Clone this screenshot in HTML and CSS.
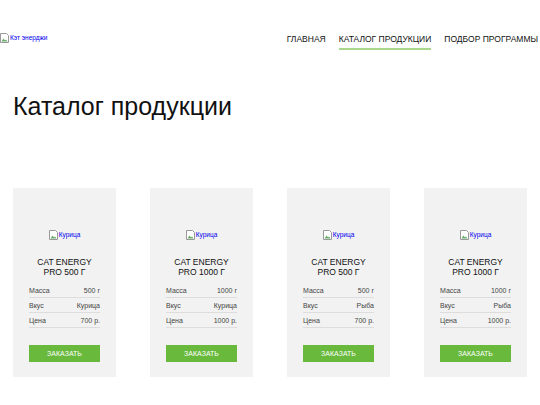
FILE: index.html
```html
<!DOCTYPE html>
<html>
<head>
 <meta charset="utf-8">
 <title>Кэт энерджи</title>
 <link rel="stylesheet" href="styles.css">
</head>
<body>
  <div class="header">
	<a class="logo" href="#"><svg class="broken" width="9" height="10" viewBox="0 0 9 10"><path d="M0.5 0.5h6l2 2v7h-8z" fill="#fff" stroke="#999"/><path d="M1.5 8.5l2-3 1.5 2 1-1 1.5 2z" fill="#6a6"/></svg>Кэт энерджи</a>
	<div class="nav">
		<a class="nav-item" href="#">Главная</a>
		<a class="nav-item nav-active" href="#">Каталог продукции</a>
		<a class="nav-item" href="#">Подбор программы</a>
	</div>
  </div>

  <h1 class="title">Каталог продукции</h1>

  <div class="catalog">
	<div class="card">
		<div class="card-img"><a href="#"><svg class="broken" width="9" height="10" viewBox="0 0 9 10"><path d="M0.5 0.5h6l2 2v7h-8z" fill="#fff" stroke="#999"/><path d="M1.5 8.5l2-3 1.5 2 1-1 1.5 2z" fill="#6a6"/></svg>Курица</a></div>
		<div class="card-name">Cat Energy<br>Pro 500 г</div>
		<table class="card-info">
			<tr><td>Масса</td><td>500 г</td></tr>
			<tr><td>Вкус</td><td>Курица</td></tr>
			<tr><td>Цена</td><td>700 р.</td></tr>
		</table>
		<a class="card-btn" href="#">Заказать</a>
	</div>
	<div class="card">
		<div class="card-img"><a href="#"><svg class="broken" width="9" height="10" viewBox="0 0 9 10"><path d="M0.5 0.5h6l2 2v7h-8z" fill="#fff" stroke="#999"/><path d="M1.5 8.5l2-3 1.5 2 1-1 1.5 2z" fill="#6a6"/></svg>Курица</a></div>
		<div class="card-name">Cat Energy<br>Pro 1000 г</div>
		<table class="card-info">
			<tr><td>Масса</td><td>1000 г</td></tr>
			<tr><td>Вкус</td><td>Курица</td></tr>
			<tr><td>Цена</td><td>1000 р.</td></tr>
		</table>
		<a class="card-btn" href="#">Заказать</a>
	</div>
	<div class="card">
		<div class="card-img"><a href="#"><svg class="broken" width="9" height="10" viewBox="0 0 9 10"><path d="M0.5 0.5h6l2 2v7h-8z" fill="#fff" stroke="#999"/><path d="M1.5 8.5l2-3 1.5 2 1-1 1.5 2z" fill="#6a6"/></svg>Курица</a></div>
		<div class="card-name">Cat Energy<br>Pro 500 г</div>
		<table class="card-info">
			<tr><td>Масса</td><td>500 г</td></tr>
			<tr><td>Вкус</td><td>Рыба</td></tr>
			<tr><td>Цена</td><td>700 р.</td></tr>
		</table>
		<a class="card-btn" href="#">Заказать</a>
	</div>
	<div class="card">
		<div class="card-img"><a href="#"><svg class="broken" width="9" height="10" viewBox="0 0 9 10"><path d="M0.5 0.5h6l2 2v7h-8z" fill="#fff" stroke="#999"/><path d="M1.5 8.5l2-3 1.5 2 1-1 1.5 2z" fill="#6a6"/></svg>Курица</a></div>
		<div class="card-name">Cat Energy<br>Pro 1000 г</div>
		<table class="card-info">
			<tr><td>Масса</td><td>1000 г</td></tr>
			<tr><td>Вкус</td><td>Рыба</td></tr>
			<tr><td>Цена</td><td>1000 р.</td></tr>
		</table>
		<a class="card-btn" href="#">Заказать</a>
	</div>
  </div>
</body>
</html>
```

FILE: styles.css
```css
  body{margin:0;font-family:"Liberation Sans",Arial,sans-serif;color:#111;background:#fff;}
  a{text-decoration:none;}

  .header{display:flex;justify-content:space-between;align-items:flex-start;padding-top:33px;height:45px;box-sizing:border-box;}
  .logo{color:#00e;font-size:6.5px;line-height:10px;display:flex;align-items:center;}
  .broken{display:block;margin-right:1px;}
  .nav{display:flex;gap:13px;padding-right:2px;}
  .nav-item{color:#111;font-size:8.5px;text-transform:uppercase;line-height:12px;padding-bottom:3px;border-bottom:2px solid transparent;}
  .nav-active{border-bottom-color:#a9d78c;}

  .title{font-size:25px;font-weight:normal;margin:45px 0 0 13px;line-height:32px;}

  .catalog{display:flex;gap:34px;padding:0 13px;margin-top:66px;}
  .card{width:103px;background:#f2f2f2;padding:42px 16px 16px;box-sizing:border-box;height:189px;}
  .card-img{text-align:center;font-size:6.5px;line-height:10px;height:10px;}
  .card-img a{color:#00e;display:inline-flex;align-items:center;}
  .card-name{text-align:center;text-transform:uppercase;font-size:8.5px;line-height:10px;margin-top:17px;}
  .card-info{width:100%;border-collapse:collapse;font-size:7px;color:#444;margin-top:6px;}
  .card-info td{border-bottom:1px solid #ddd;height:14px;padding:0;}
  .card-info td + td{text-align:right;}
  .card-btn{display:block;background:#68b93c;color:#fff;text-align:center;text-transform:uppercase;font-size:7px;line-height:17px;margin-top:17px;}
```
